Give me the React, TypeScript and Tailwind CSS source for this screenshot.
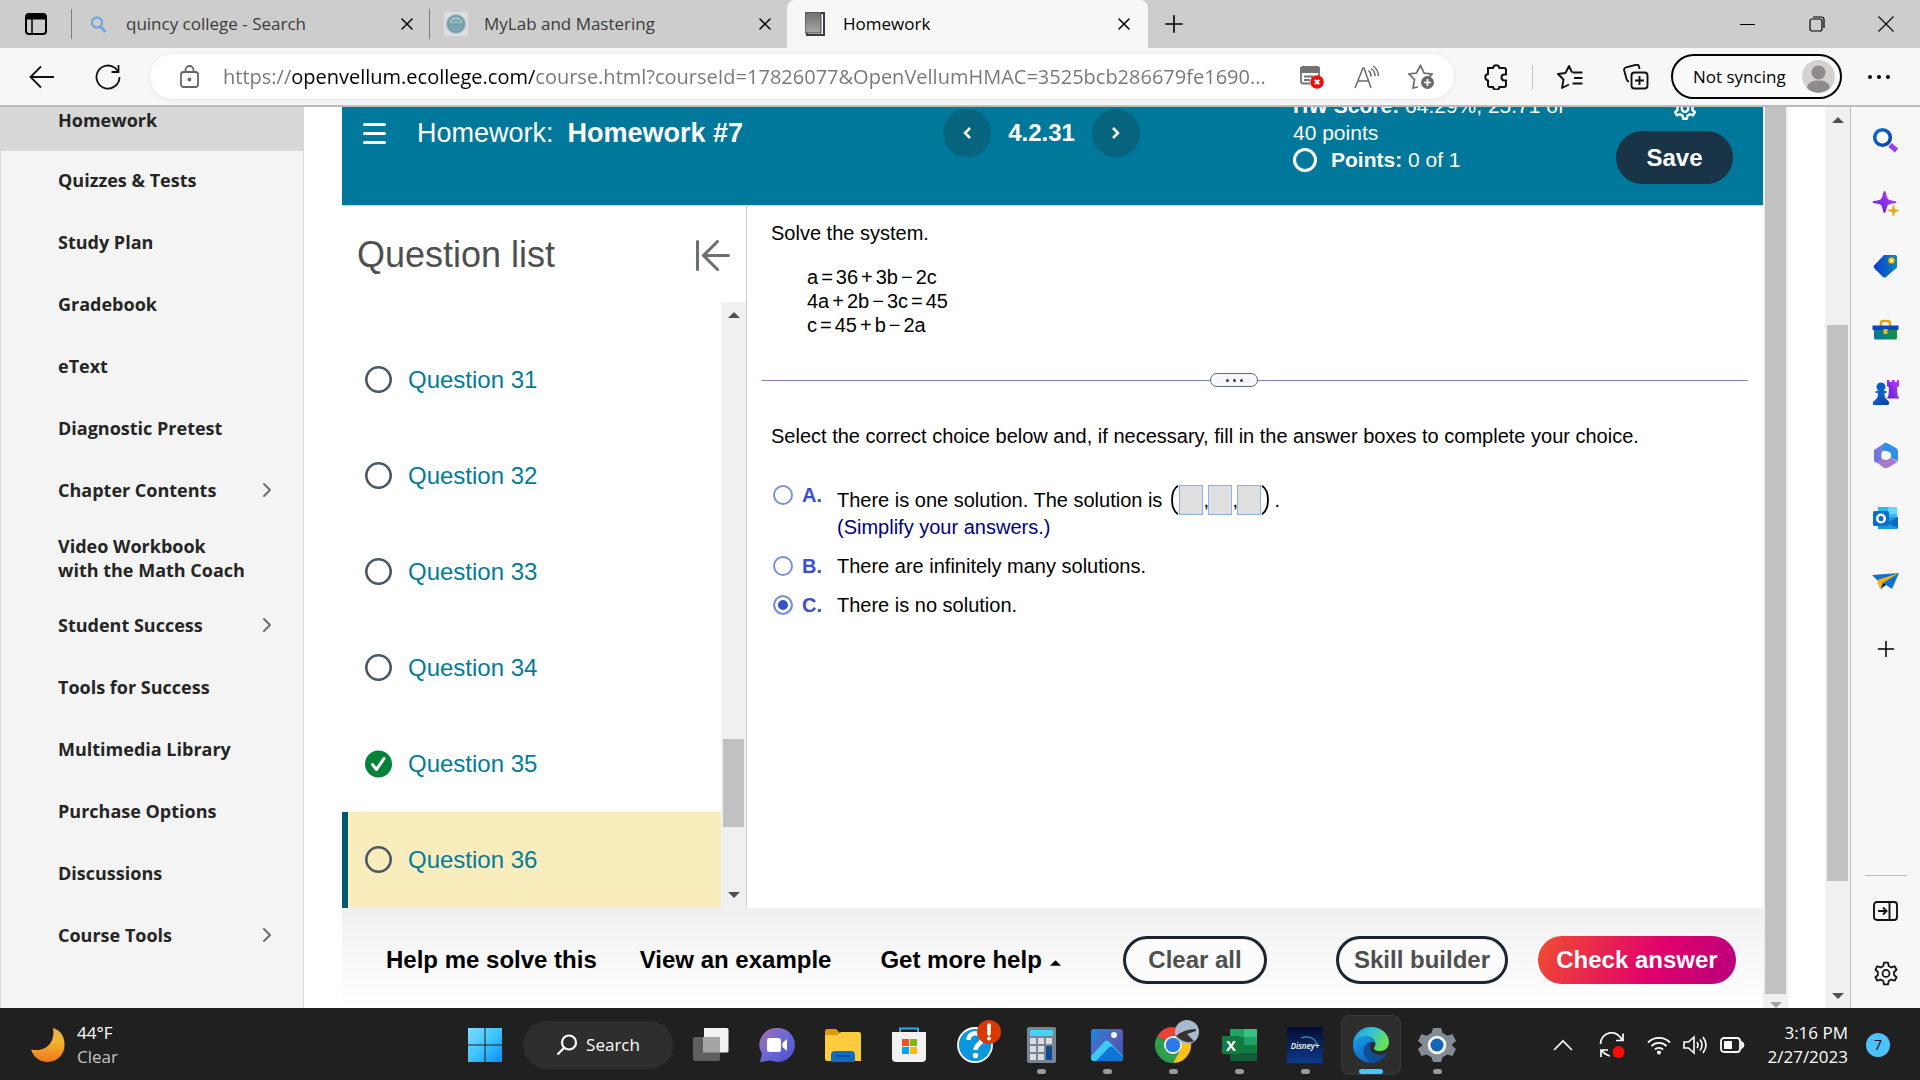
import { useState } from 'react';
import type { ReactNode } from 'react';
import { ChevronRight, Plus, X } from 'lucide-react';

const navItems = [
  { label: 'Quizzes & Tests' },
  { label: 'Study Plan' },
  { label: 'Gradebook' },
  { label: 'eText' },
  { label: 'Diagnostic Pretest' },
  { label: 'Chapter Contents', more: true },
  { label: 'Video Workbook with the Math Coach', tall: true },
  { label: 'Student Success', more: true },
  { label: 'Tools for Success' },
  { label: 'Multimedia Library' },
  { label: 'Purchase Options' },
  { label: 'Discussions' },
  { label: 'Course Tools', more: true },
];

const questions = [
  { id: 31, done: false },
  { id: 32, done: false },
  { id: 33, done: false },
  { id: 34, done: false },
  { id: 35, done: true },
  { id: 36, done: false },
];

const equations = [
  ['a', '=', '36', '+', '3b', '−', '2c'],
  ['4a', '+', '2b', '−', '3c', '=', '45'],
  ['c', '=', '45', '+', 'b', '−', '2a'],
];

export default function App() {
  return (
    <div className="flex h-screen flex-col overflow-hidden bg-white font-['Open_Sans','Noto_Sans',sans-serif] text-black">
      <TabStrip />
      <Toolbar />
      <div className="flex min-h-0 flex-1">
        <CourseNav />
        <main className="flex min-w-0 flex-1 pl-[38px] font-['Liberation_Sans',Arial,sans-serif]">
          <div className="flex min-w-0 flex-1 flex-col">
            <HomeworkHeader />
            <div className="flex min-h-0 flex-1">
              <QuestionList />
              <Question />
            </div>
            <ActionBar />
          </div>
          {/* Scrollbar of the inner frame */}
          <div className="flex w-[25px] flex-col items-center bg-[#f0f0f0]">
            <div className="w-[21px] flex-1 bg-[#c1c1c1]" />
            <div className="flex h-[14px] items-end overflow-hidden">
              <Arrow className="h-[6px] w-[12px] rotate-180 text-[#a3a3a3]" />
            </div>
          </div>
        </main>
        {/* Scrollbar of the page */}
        <div className="ml-[37px] flex w-[26px] flex-col items-center border-r border-[#bcbcbc] bg-[#f0f0f0]">
          <Arrow className="mt-[10px] h-[6px] w-[12px] shrink-0 text-[#505050]" />
          <div className="mt-[202px] w-[21px] flex-1 bg-[#c1c1c1]" />
          <Arrow className="mt-[112px] mb-[9px] h-[6px] w-[12px] shrink-0 rotate-180 text-[#505050]" />
        </div>
        <EdgeSidebar />
      </div>
      <Taskbar />
    </div>
  );
}

function Arrow({ className }: { className: string }) {
  return (
    <svg viewBox="0 0 12 6" className={className}>
      <path d="M0 6 6 0l6 6z" fill="currentColor" />
    </svg>
  );
}

function TabStrip() {
  return (
    <header className="flex h-12 shrink-0 bg-[#cdcdcd] text-[17px]">
      <button aria-label="Tab actions" className="flex w-[71px] items-center justify-center">
        <svg width="22" height="22" viewBox="0 0 22 22" fill="none" stroke="#000" strokeWidth="2">
          <rect x="1" y="1" width="20" height="20" rx="3" />
          <path d="M2 4h18" strokeWidth="5" />
          <path d="M7 6v15" strokeWidth="1.5" />
        </svg>
      </button>
      <Tab title="quincy college - Search">
        <svg width="17" height="17" viewBox="0 0 17 17" fill="none" stroke="#74a9da" strokeWidth="2.4">
          <circle cx="7" cy="6.5" r="5" />
          <path d="m10.500 10.500 5 5.500" strokeWidth="3" />
        </svg>
      </Tab>
      <Tab title="MyLab and Mastering">
        <svg width="24" height="24" viewBox="0 0 24 24">
          <path d="M0 0h24v24H0z" fill="#dedede" />
          <circle cx="12" cy="12" r="10" fill="#9dbcc4" />
          <circle cx="12" cy="12" r="8" fill="none" stroke="#6d9aa6" strokeWidth="1.500" />
          <path d="M5 12h14v2a7 5 0 0 1-14 0z" fill="#7fa6b0" />
          <path d="M5 12h14M8 9h8" stroke="#5d8f9c" strokeWidth="1.200" />
        </svg>
      </Tab>
      <Tab title="Homework" active>
        <svg width="20" height="24" viewBox="0 0 20 24">
          <defs>
            <linearGradient id="book" x1="0" y1="0" x2="0" y2="1">
              <stop offset="0" stopColor="#6e6e6e" />
              <stop offset="1" stopColor="#a8a8a8" />
            </linearGradient>
          </defs>
          <rect x="2" y="1" width="17" height="22" fill="#fff" stroke="#3c3a42" strokeWidth="2" />
          <rect x="0" y="0" width="16" height="21" fill="url(#book)" stroke="#444" strokeWidth="1" />
        </svg>
      </Tab>
      <button aria-label="New tab" className="flex w-[52px] items-center justify-center">
        <Plus size={28} strokeWidth={1.4} />
      </button>
      <div className="ml-auto flex">
        <button aria-label="Minimize" className="flex w-[69px] items-center justify-center">
          <span className="h-px w-[15px] bg-black" />
        </button>
        <button aria-label="Restore" className="flex w-[69px] items-center justify-center">
          <svg width="16" height="16" viewBox="0 0 16 16" fill="none" stroke="#000" strokeWidth="1.2">
            <rect x="1" y="3" width="12" height="12" rx="2" />
            <path d="M4 1h8.500a2.500 2.500 0 0 1 2.500 2.500V12" />
          </svg>
        </button>
        <button aria-label="Close" className="flex w-[69px] items-center justify-center">
          <svg width="16" height="16" viewBox="0 0 16 16" stroke="#000" strokeWidth="1.1">
            <path d="m.5.500 15 15m0-15-15 15" />
          </svg>
        </button>
      </div>
    </header>
  );
}

function Tab({ title, active, children }: { title: string; active?: boolean; children: ReactNode }) {
  return (
    <div
      className={
        active
          ? 'flex w-[361px] items-center rounded-t-lg bg-[#f7f7f7] pl-3 pr-[14px]'
          : 'flex w-[358px] items-center pr-3 text-[#3b3b3b]'
      }
    >
      {!active && <span className="mr-[10px] h-[30px] w-px bg-[#7d7d7d]" />}
      <span className="flex w-8 justify-center">{children}</span>
      <span className="ml-3 flex-1 truncate">{title}</span>
      <button aria-label={'Close ' + title} className="text-black">
        <X size={20} strokeWidth={1.8} />
      </button>
    </div>
  );
}

function Toolbar() {
  return (
    <div className="flex h-[59px] shrink-0 items-center border-b-2 border-[#bcbcbc] bg-[#f7f7f7]">
      <button aria-label="Back" className="ml-[29px]">
        <svg width="26" height="24" viewBox="0 0 26 24" fill="none" stroke="#111" strokeWidth="1.800">
          <path d="M25 12H2M12 1.500 1.500 12 12 22.500" />
        </svg>
      </button>
      <button aria-label="Refresh" className="ml-10">
        <svg width="26" height="26" viewBox="0 0 26 26" fill="none" stroke="#111" strokeWidth="1.800">
          <path d="M24.500 13a11.500 11.500 0 1 1-4.500-9.100l3 3" />
          <path d="M23.500 1v7H16.500" />
        </svg>
      </button>
      <div className="ml-[29px] flex h-[45px] min-w-0 flex-1 items-center rounded-full bg-white pl-[30px] pr-5 shadow-[0_1px_5px_rgba(0,0,0,0.08)]">
        <svg width="19" height="23" viewBox="0 0 19 23" fill="none" stroke="#666" strokeWidth="1.800" className="shrink-0">
          <rect x="1" y="7" width="17" height="15" rx="2.500" />
          <path d="M5.500 7V5a4 4 0 0 1 8 0v2" />
          <circle cx="9.500" cy="14.500" r="1" fill="#666" />
        </svg>
        <input
          aria-label="Address"
          readOnly
          value="https://openvellum.ecollege.com/course.html?courseId=17826077&OpenVellumHMAC=3525bcb286679fe1690..."
          className="ml-6 h-8 min-w-0 flex-1 bg-[linear-gradient(90deg,#767676_69px,#000_69px,#000_312px,#767676_312px)] bg-clip-text text-[20px] text-transparent outline-none"
        />
        <button aria-label="Pop-ups blocked" className="mx-4 shrink-0">
          <svg width="25" height="24" viewBox="0 0 25 24">
            <path d="M1 3.500A2.500 2.500 0 0 1 3.500 1h15A2.500 2.500 0 0 1 21 3.500V8H1z" fill="#737373" />
            <path d="M2 6v10.500A2 2 0 0 0 4 18.500h7M20 6v5M5 11.500h9M5 15h6" fill="none" stroke="#737373" strokeWidth="1.800" />
            <circle cx="18" cy="17" r="6.800" fill="#f20d0d" />
            <path d="m15.800 14.800 4.400 4.400m0-4.400-4.400 4.400" stroke="#fff" strokeWidth="2" />
          </svg>
        </button>
        <button aria-label="Read aloud" className="mx-[14px] shrink-0">
          <svg width="26" height="24" viewBox="0 0 26 24" fill="none" stroke="#6b6b6b" strokeWidth="1.500">
            <path d="m1 23 8-20h1l7 20M4 16h10.500" />
            <path d="M14.500 5.500a6.500 6.500 0 0 1 2.500 6M17 3.500a9 9 0 0 1 4 7.500M19 1a12.500 12.500 0 0 1 5.500 10" />
          </svg>
        </button>
        <button aria-label="Add to favorites" className="ml-[14px] shrink-0">
          <svg width="26" height="26" viewBox="0 0 26 26" fill="none" stroke="#6b6b6b" strokeWidth="1.700">
            <path d="M10 23 5 24l1.500-8.500L1 10l7.500-1L12.500 1.500 16 9l8 1.200-3 3" />
            <circle cx="19.500" cy="18.500" r="6.500" fill="#6b6b6b" stroke="none" />
            <path d="M19.500 15v7M16 18.500h7" stroke="#fff" />
          </svg>
        </button>
      </div>
      <button aria-label="Extensions" className="ml-[30px]">
        <svg width="24" height="26" viewBox="0 0 24 26" fill="none" stroke="#111" strokeWidth="2">
          <path d="M4 4h5a3.300 3.300 0 0 1 6.500 0H20a2 2 0 0 1 2 2v4.500h-1.500a3 3 0 0 0 0 6H22V21a2 2 0 0 1-2 2h-4.500a3.300 3.300 0 0 1-6.500 0H6a2 2 0 0 1-2-2v-4.500a3.300 3.300 0 0 1 0-6.500z" />
        </svg>
      </button>
      <span className="ml-6 h-6 w-px bg-[#c4c4c4]" />
      <button aria-label="Favorites" className="ml-6">
        <svg width="26" height="26" viewBox="0 0 26 26" fill="none" stroke="#111" strokeWidth="1.900">
          <path d="M15 8.500 12 2 8.500 9 1 10l5.500 5.500L5 24l7-3.500M15.500 8.500h10M17 14h8.500M15.500 19.500h10" strokeLinejoin="round" />
        </svg>
      </button>
      <button aria-label="Collections" className="ml-10">
        <svg width="26" height="26" viewBox="0 0 26 26" fill="none" stroke="#111" strokeWidth="1.900">
          <rect x="8.500" y="8.500" width="16" height="16" rx="3" />
          <path d="M16.500 12v9M12 16.500h9M6 17.500c-1.500 0-2-1-2.300-2L1.200 6.500c-.4-1.600.3-2.700 1.800-3.200l10-2.500c1.600-.4 2.600.3 3 1.700l.6 2.500" />
        </svg>
      </button>
      <button className="ml-[22px] flex h-[45px] w-[171px] items-center justify-between rounded-full border-2 border-black bg-[#fafafa] pl-5 pr-[5px] text-[17px]">
        Not syncing
        <svg width="33" height="33" viewBox="0 0 33 33">
          <circle cx="16.500" cy="16.500" r="16.500" fill="#d4d2d0" />
          <circle cx="16.500" cy="12.500" r="7" fill="#8f8b88" />
          <path d="M5 28c1-6 6-7.500 11.500-7.500S27 22 28 28a16.500 16.500 0 0 1-23 0z" fill="#8f8b88" />
        </svg>
      </button>
      <button aria-label="Settings and more" className="mx-[26px] flex gap-[5px] pr-1">
        <span className="size-[4px] rounded-full bg-black" />
        <span className="size-[4px] rounded-full bg-black" />
        <span className="size-[4px] rounded-full bg-black" />
      </button>
    </div>
  );
}

function CourseNav() {
  return (
    <nav className="w-[304px] shrink-0 overflow-hidden border-x border-[#d8d8d8] bg-[#f4f4f4] text-[18px] leading-6 font-bold text-[#252525]">
      <a href="#homework" className="flex h-[44px] items-center bg-[#d8d8d8] pb-[18px] pl-[57px]">
        Homework
      </a>
      {navItems.map((item) => (
        <a
          key={item.label}
          href="#"
          className={
            item.tall
              ? 'flex h-[73px] items-center pb-1 pl-[57px] pr-14'
              : 'flex h-[62px] items-center justify-between pb-1 pl-[57px] pr-[24px]'
          }
        >
          {item.label}
          {item.more && <ChevronRight size={24} strokeWidth={2} className="text-[#6a7070]" />}
        </a>
      ))}
    </nav>
  );
}

function HomeworkHeader() {
  return (
    <div className="flex h-[99px] shrink-0 items-end overflow-hidden border-b border-[#c7d3e6] bg-[#00789b] pl-[21px] pr-[30px] text-white">
      <div className="flex flex-1 items-center pb-12">
        <button aria-label="Menu" className="flex h-12 flex-col justify-center gap-[6px]">
          <span className="h-[3px] w-[23px] rounded bg-white" />
          <span className="h-[3px] w-[23px] rounded bg-white" />
          <span className="h-[3px] w-[23px] rounded bg-white" />
        </button>
        <h1 className="ml-[31px] flex gap-[14px] text-[27px]">
          <span>Homework:</span>
          <b>Homework #7</b>
        </h1>
      </div>
      <div className="flex w-[197px] items-center justify-between pb-12 text-2xl font-bold">
        <button aria-label="Previous question" className="flex size-12 items-center justify-center rounded-full bg-[#06647f]">
          <svg width="8" height="12" viewBox="0 0 8 12" fill="none" stroke="#fff" strokeWidth="2.500">
            <path d="M7 1 2 6l5 5" />
          </svg>
        </button>
        4.2.31
        <button aria-label="Next question" className="flex size-12 items-center justify-center rounded-full bg-[#06647f]">
          <svg width="8" height="12" viewBox="0 0 8 12" fill="none" stroke="#fff" strokeWidth="2.500">
            <path d="m1 1 5 5-5 5" />
          </svg>
        </button>
      </div>
      <div className="ml-[153px] w-[323px] pb-8 text-[21px] leading-[27px]">
        <p className="w-[280px]">
          <b>HW Score:</b> 64.29%, 25.71 of 40 points
        </p>
        <p className="flex items-center">
          <svg width="24" height="24" viewBox="0 0 24 24" className="mr-[14px]">
            <circle cx="12" cy="12" r="10.500" fill="none" stroke="#fff" strokeWidth="3" />
          </svg>
          <span>
            <b>Points:</b> 0 of 1
          </span>
        </p>
      </div>
      <div className="flex flex-col items-center gap-2 pb-[21px]">
        <button aria-label="Settings" className="ml-5">
          <GearIcon className="size-[26px]" width={2.2} />
        </button>
        <button className="h-[53px] w-[117px] rounded-full bg-[#193446] text-2xl font-bold">Save</button>
      </div>
    </div>
  );
}

function GearIcon({ className, width }: { className: string; width: number }) {
  return (
    <svg viewBox="0 0 24 24" fill="none" stroke="currentColor" strokeWidth={width} strokeLinejoin="round" className={className}>
      <path d="M9.700 4.200 10.300 1.300h3.400l.6 2.900 2.200 1.300 2.900-1 1.700 3-2.200 1.900v2.600l2.200 1.900-1.700 3-2.900-1-2.200 1.300-.6 2.900h-3.400l-.6-2.900-2.200-1.300-2.900 1-1.700-3 2.200-1.900V9.400L2.900 7.500l1.700-3 2.900 1z" />
      <circle cx="12" cy="10.700" r="3" />
    </svg>
  );
}

function QuestionList() {
  return (
    <aside className="flex w-[405px] shrink-0 flex-col border-r border-[#c7cfe0]">
      <div className="flex h-24 shrink-0 items-center justify-between pl-[15px] pr-4 pt-[2px]">
        <h2 className="text-4xl text-[#4f4f4f]">Question list</h2>
        <button aria-label="Collapse question list">
          <svg width="34" height="31" viewBox="0 0 34 31" fill="none" stroke="#6a7070" strokeWidth="3" strokeLinecap="round">
            <path d="M1.500 1.500v28M32.500 15.500H8M21.500 1.500 7.500 15.500l14 14" />
          </svg>
        </button>
      </div>
      <div className="flex min-h-0 flex-1">
        <ul className="flex flex-1 flex-col justify-end overflow-hidden">
          {questions.map((q) => (
            <li key={q.id}>
              <a
                href="#"
                className={
                  q.id === 36
                    ? 'flex h-24 items-center border-l-6 border-[#005a70] bg-[#f9ecbd] pl-[17px] text-2xl text-[#047a9c]'
                    : 'flex h-24 items-center border-l-6 border-transparent pl-[17px] text-2xl text-[#047a9c]'
                }
              >
                <svg width="27" height="28" viewBox="0 0 27 28" fill="none" className="mr-4">
                  {q.done ? (
                    <>
                      <circle cx="13.500" cy="14" r="13.500" fill="#038238" />
                      <path d="m7.500 14.500 4 5L19 8.500" stroke="#fff" strokeWidth="3" strokeLinecap="round" strokeLinejoin="round" />
                    </>
                  ) : (
                    <circle cx="13.500" cy="13.500" r="12.200" stroke="#4a5864" strokeWidth="2.600" />
                  )}
                </svg>
                Question {q.id}
              </a>
            </li>
          ))}
        </ul>
        <div className="flex w-[25px] flex-col items-center bg-[#f0f0f0]">
          <Arrow className="mt-[10px] h-[6px] w-[12px] text-[#505050]" />
          <div className="mt-auto h-[88px] w-[21px] bg-[#c1c1c1]" />
          <Arrow className="mt-[65px] mb-[10px] h-[6px] w-[12px] rotate-180 text-[#505050]" />
        </div>
      </div>
    </aside>
  );
}

function Question() {
  const [choice, setChoice] = useState('C');

  return (
    <section className="flex-1 px-[15px] pt-[15px] text-[20px] leading-6">
      <p className="pl-[9px]">Solve the system.</p>
      <div className="mt-5 pl-[45px]">
        {equations.map((parts, i) => (
          <p key={i} className="flex gap-[3px]">
            {parts.map((part, j) => (
              <span key={j}>{part}</span>
            ))}
          </p>
        ))}
      </div>

      <div className="mt-9 flex items-center">
        <span className="h-px flex-1 bg-[#7f88a8]" />
        <button aria-label="Resize panes" className="flex h-[14px] w-12 items-center justify-center gap-[4px] rounded-[7px] border border-[#5b6b7b] bg-[#f5f7f9]">
          <span className="size-[3px] rounded-full bg-[#333f4a]" />
          <span className="size-[3px] rounded-full bg-[#333f4a]" />
          <span className="size-[3px] rounded-full bg-[#333f4a]" />
        </button>
        <span className="h-px grow basis-[42px] bg-[#7f88a8]" />
      </div>

      <p className="mt-[37px] pl-[9px]">
        Select the correct choice below and, if necessary, fill in the answer boxes to complete your choice.
      </p>

      <div className="mt-[37px] flex flex-col gap-[15px] pl-[11px]">
        <div className="flex items-start">
          <Choice letter="A" choice={choice} onPick={setChoice} />
          <div>
            <div className="flex h-[30px] items-center">
              <label htmlFor="choice-A">There is one solution. The solution is</label>
              <Paren className="ml-2" />
              <AnswerBox label="First value" />
              <span className="w-[5px]">,</span>
              <AnswerBox label="Second value" />
              <span className="w-[5px]">,</span>
              <AnswerBox label="Third value" />
              <Paren className="rotate-180" />
              <span className="ml-1">.</span>
            </div>
            <p className="text-[#00007f]">(Simplify your answers.)</p>
          </div>
        </div>
        <div className="flex items-center">
          <Choice letter="B" choice={choice} onPick={setChoice} />
          <label htmlFor="choice-B">There are infinitely many solutions.</label>
        </div>
        <div className="flex items-center">
          <Choice letter="C" choice={choice} onPick={setChoice} />
          <label htmlFor="choice-C">There is no solution.</label>
        </div>
      </div>
    </section>
  );
}

function Choice({ letter, choice, onPick }: { letter: string; choice: string; onPick: (letter: string) => void }) {
  return (
    <div className="flex h-5 w-16 items-center gap-[9px]">
      <input
        type="radio"
        name="choice"
        id={'choice-' + letter}
        checked={choice === letter}
        onChange={() => onPick(letter)}
        className="size-5 shrink-0 appearance-none rounded-full border-2 border-[#7a8fe0] bg-white checked:bg-[#3351c9] checked:shadow-[inset_0_0_0_3px_#fff]"
      />
      <b className="text-[#3b50cc]">{letter}.</b>
    </div>
  );
}

function AnswerBox({ label }: { label: string }) {
  return <input type="text" aria-label={label} className="h-[30px] w-6 border border-[#8fb0ec] bg-[#dfdfdf] outline-none" />;
}

function Paren({ className }: { className: string }) {
  return (
    <svg width="9" height="30" viewBox="0 0 9 30" fill="none" stroke="#000" strokeWidth="1.800" className={className}>
      <path d="M8 .8C0 6 0 24 8 29.200" />
    </svg>
  );
}

function ActionBar() {
  return (
    <div className="flex h-[100px] shrink-0 items-center bg-linear-to-b from-[#f0f0f0] to-white pl-11 pr-[27px] pt-1 text-2xl font-bold">
      <button className="mr-[43px]">Help me solve this</button>
      <button className="mr-[49px]">View an example</button>
      <button className="flex items-center gap-2">
        Get more help
        <Arrow className="mt-[5px] h-[6px] w-[11px]" />
      </button>
      <button className="ml-auto h-12 w-36 rounded-full border-3 border-[#1c2530] bg-[#fcfcfc] text-[#4f4f4f]">Clear all</button>
      <button className="ml-[69px] h-12 w-[172px] rounded-full border-3 border-[#1c2530] bg-[#fcfcfc] text-[#4f4f4f]">Skill builder</button>
      <button className="ml-[30px] h-12 w-[198px] rounded-full bg-[linear-gradient(115deg,#f04e30,#e0006c_60%,#b5007c)] text-white">
        Check answer
      </button>
    </div>
  );
}

function EdgeSidebar() {
  return (
    <aside className="flex w-[69px] shrink-0 flex-col items-center bg-[#f7f7f7] pt-[2px]">
      <svg width="0" height="0" className="absolute">
        <defs>
          <linearGradient id="blue" x1="0" y1="0" x2="1" y2="1">
            <stop offset="0" stopColor="#0f6fd0" />
            <stop offset="1" stopColor="#0a3fae" />
          </linearGradient>
          <linearGradient id="tag" x1="0" y1="0" x2="1" y2="0">
            <stop offset="0" stopColor="#0a3cd0" />
            <stop offset="1" stopColor="#0b84b8" />
          </linearGradient>
          <linearGradient id="purple" x1="0" y1="1" x2="1" y2="0">
            <stop offset="0" stopColor="#5a1fd0" />
            <stop offset="1" stopColor="#c03cff" />
          </linearGradient>
          <linearGradient id="green" x1="0" y1="0" x2="1" y2="0">
            <stop offset="0" stopColor="#0873a8" />
            <stop offset="1" stopColor="#12933f" />
          </linearGradient>
        </defs>
      </svg>
      <SideButton label="Search">
        <circle cx="10.500" cy="10.500" r="7.800" fill="#fff" stroke="url(#blue)" strokeWidth="3.600" />
        <path d="m18 18 6.500 5.500" stroke="#9a3df0" strokeWidth="5" />
      </SideButton>
      <SideButton label="Discover">
        <path d="M12.500 1c1.800 0 1.800 6 3.500 8s8.500 1.500 8.500 3-6.800 1.500-8.500 3-1.700 8-3.500 8-1.700-6.500-3.500-8S.5 13.500.5 12 7 11 9 9s1.700-8 3.500-8z" fill="url(#purple)" />
        <path d="M21.500 15c1 0 1 3.500 1.500 4s4 .5 4 1.500-3.500 1-4 1.500-.5 4-1.500 4-1-3.500-1.500-4-4-.5-4-1.500 3.500-1 4-1.500.5-4 1.500-4z" fill="#eda90c" />
      </SideButton>
      <SideButton label="Shopping">
        <path d="M12 2h11a2 2 0 0 1 2 2v10.500L14 24c-1.500 1-2.500.5-3.500-.5l-8-8c-1-1-1-2.500 0-3.500z" fill="url(#tag)" />
        <circle cx="19.500" cy="7.500" r="2.400" fill="#fff" stroke="#f4b400" strokeWidth="1.800" />
      </SideButton>
      <SideButton label="Tools">
        <path d="M9 10V7a2 2 0 0 1 2-2h5a2 2 0 0 1 2 2v3" fill="none" stroke="#eda50c" strokeWidth="2.600" />
        <path d="M2 13h23v9a1.500 1.500 0 0 1-1.500 1.500h-20A1.500 1.500 0 0 1 2 22z" fill="url(#green)" />
        <path d="M.5 9.500h26v4.500h-26z" fill="#0a47c4" />
        <path d="M11.500 13h4v5h-4z" fill="#f5b80f" />
      </SideButton>
      <SideButton label="Games">
        <path d="M15 1h2.500v2H20V1h2.500v2H25V1h2v6l-2 1.500.5 8 2 3H15l1.500-3 .5-8L15 7z" fill="url(#purple)" />
        <circle cx="9" cy="8" r="4.500" fill="#0d5fc8" />
        <path d="M3.500 12h11v2h-2c0 4 .5 5 4 8 1 2 .5 4-.5 4H1.500c-1-1-1-3 .5-4 3.500-3 4-4 4-8H3.500z" fill="url(#blue)" />
      </SideButton>
      <SideButton label="Microsoft 365">
        <path d="M2 8 12 1.500c1.500-.8 3-.5 3-.5L11 9l-2 2v7L4 21l-2-2z" fill="#7a78dc" />
        <path d="M12 1.500c1-.8 3-.8 4 0l8 4.500c1.500 1 2 2 2 4v9l-7-3v-5L10 8z" fill="#2f8fe6" />
        <path d="M2 18.500 9 17l10-1 6.500 3.500-1 1-8 5c-1.500.8-3.500.8-5 0z" fill="#a77bcc" />
        <path d="M2 8v10.500l3 2 4.500-3v-7z" fill="#6f76dc" />
        <circle cx="14" cy="13.500" r="4.600" fill="#f7f7f7" />
      </SideButton>
      <SideButton label="Outlook">
        <path d="M6 2h19v14H6z" fill="#35b8f1" />
        <path d="M16 2h9v7h-9z" fill="#5fdcff" />
        <path d="M5 12l21 0v11a1 1 0 0 1-1 1H6z" fill="#1a9ae0" />
        <path d="m15 18 11-6v11z" fill="#0f6cbd" />
        <rect x="1" y="6" width="16" height="15" rx="1.500" fill="#0a6fcc" />
        <circle cx="9" cy="13.500" r="3.800" fill="none" stroke="#fff" strokeWidth="2.500" />
      </SideButton>
      <SideButton label="Drop">
        <path d="M0 7 27 5l-7 16-6-4-5 4-2-7z" fill="#0c72cf" />
        <path d="M27 5 5 12l3 9 2-1 1-5z" fill="#f3ae12" />
        <path d="m9 20 2-5 3 2z" fill="#1c1a4a" />
      </SideButton>
      <button aria-label="Customize sidebar" className="mt-1 flex h-[63px] items-center">
        <Plus size={26} strokeWidth={1.400} />
      </button>
      <hr className="mt-auto w-[42px] border-[#bcbcbc]" />
      <button aria-label="Hide sidebar" className="mt-[23px]">
        <svg width="25" height="24" viewBox="0 0 25 24" fill="none" stroke="#111" strokeWidth="1.900">
          <rect x="1" y="3" width="23" height="18" rx="3" />
          <path d="M16.500 3v18M5 12h8M10 8.500l3.500 3.500-3.500 3.500" />
        </svg>
      </button>
      <button aria-label="Sidebar settings" className="mt-[38px] mb-[19px]">
        <GearIcon className="size-7 text-[#111]" width={1.5} />
      </button>
    </aside>
  );
}

function SideButton({ label, children }: { label: string; children: ReactNode }) {
  return (
    <button aria-label={label} className="flex h-[63px] w-full shrink-0 items-center justify-center">
      <svg width="27" height="27" viewBox="0 0 27 27">
        {children}
      </svg>
    </button>
  );
}

function Taskbar() {
  return (
    <footer className="flex h-[72px] shrink-0 items-center bg-[#202020] pt-[2px] pl-[2px] text-[17px] text-white">
      <div className="flex flex-1 items-center">
        <svg width="34" height="34" viewBox="0 0 34 34" className="ml-[29px]">
          <defs>
            <linearGradient id="moon" x1="0" y1="0" x2="0" y2="1">
              <stop offset="0" stopColor="#e8b44a" />
              <stop offset="0.4" stopColor="#f2b52c" />
              <stop offset="1" stopColor="#f0761a" />
            </linearGradient>
          </defs>
          <path d="M22 0c7 2 11.500 8 11.500 16A17 17 0 0 1 17 34C9 34 2.500 29.500 0 21.500c12 3 25-5 22-21.500z" fill="url(#moon)" />
        </svg>
        <p className="ml-3 leading-6">
          44°F
          <span className="block text-[#c4c4c4]">Clear</span>
        </p>
      </div>

      <div className="flex">
        <TaskbarButton label="Start">
          <defs>
            <linearGradient id="win" x1="0" y1="0" x2="1" y2="1">
              <stop offset="0" stopColor="#7fdcff" />
              <stop offset="0.5" stopColor="#3fc4fb" />
              <stop offset="1" stopColor="#0a8cf5" />
            </linearGradient>
          </defs>
          <path d="M1 1h16.500v16.500H1zM18.500 1H35v16.500H18.500zM1 18.500h16.500V35H1zM18.500 18.500H35V35H18.500z" fill="url(#win)" />
        </TaskbarButton>
        <button className="mx-[5px] mt-[6px] flex h-12 w-[150px] items-center justify-center gap-2 rounded-full bg-[#2e2e2e]">
          <svg width="22" height="22" viewBox="0 0 22 22" fill="none" stroke="#fff" strokeWidth="2.200">
            <circle cx="13" cy="8.500" r="7" />
            <path d="m8 14-6.500 6.500" />
          </svg>
          Search
        </button>
        <TaskbarButton label="Task view">
          <path d="M11 1h23a1.500 1.500 0 0 1 1.500 1.500V24A1.500 1.500 0 0 1 34 25.500H11z" fill="#f2f2f2" />
          <path d="M0 12a2 2 0 0 1 2-2h25v22a2 2 0 0 1-2 2H2a2 2 0 0 1-2-2z" fill="#5f5f5f" />
          <path d="M10 10h17v15.500H10z" fill="#a5a5a5" />
        </TaskbarButton>
        <TaskbarButton label="Chat">
          <defs>
            <linearGradient id="chat" x1="0" y1="0" x2="1" y2="1">
              <stop offset="0" stopColor="#a86fb0" />
              <stop offset="0.5" stopColor="#6a68d4" />
              <stop offset="1" stopColor="#4a4fcf" />
            </linearGradient>
          </defs>
          <path d="M18 1a17 17 0 1 1-6 32.500L1 35l2-8A17 17 0 0 1 18 1z" fill="url(#chat)" />
          <rect x="8" y="11" width="14" height="14" rx="2.500" fill="#fff" />
          <path d="m23.500 16 4.500-4v12l-4.500-4z" fill="#fff" />
        </TaskbarButton>
        <TaskbarButton label="File Explorer">
          <path d="M0 4a2 2 0 0 1 2-2h9l4 4v5H0z" fill="#dc9a10" />
          <path d="M0 8h12l4-3h18a2 2 0 0 1 2 2v27H2a2 2 0 0 1-2-2z" fill="#fccb3e" />
          <path d="M6 35v-7a4 4 0 0 1 4-4h16a4 4 0 0 1 4 4v7z" fill="#0f6cc4" />
          <path d="M11 29h14" stroke="#0a478c" strokeWidth="1.500" />
        </TaskbarButton>
        <TaskbarButton label="Microsoft Store">
          <path d="M9 6V1.500h18V6" fill="none" stroke="#2ea9ec" strokeWidth="2" />
          <path d="M1 5h34v26a4 4 0 0 1-4 4H5a4 4 0 0 1-4-4z" fill="#f1f1f1" />
          <path d="M11 12h7v7h-7z" fill="#f25022" />
          <path d="M19 12h7v7h-7z" fill="#7fba00" />
          <path d="M11 20h7v7h-7z" fill="#00a4ef" />
          <path d="M19 20h7v7h-7z" fill="#ffb900" />
        </TaskbarButton>
        <TaskbarButton label="Get Help">
          <circle cx="18" cy="18" r="17" fill="#0a97dc" stroke="#fff" strokeWidth="1.800" />
          <path d="M11.500 13c0-9 14-8.500 13.500-1-.3 5-6.500 5.500-6.500 11" fill="none" stroke="#fff" strokeWidth="4.500" />
          <circle cx="18.500" cy="28.500" r="2.700" fill="#fff" />
          <circle cx="32" cy="5" r="12" fill="#d83b01" />
          <path d="M32-2v9" stroke="#fff" strokeWidth="3.600" strokeLinecap="round" />
          <circle cx="32" cy="11.500" r="1.900" fill="#fff" />
        </TaskbarButton>
        <TaskbarButton label="Calculator" running>
          <rect x="4" y="0" width="29" height="36" rx="2" fill="#7b8590" />
          <path d="M7 3h23v6H7z" fill="#41d6f7" />
          <path d="M7 11h6v6H7zM15 11h6v6h-6zM23 11h6v6h-6zM7 19h6v6H7zM15 19h6v6h-6zM7 27h6v6H7zM15 27h6v6h-6z" fill="#d9dee6" />
          <path d="M23 19h6v14h-6z" fill="#114a94" />
        </TaskbarButton>
        <TaskbarButton label="Photos" running>
          <defs>
            <linearGradient id="photo" x1="0" y1="0" x2="1" y2="1">
              <stop offset="0" stopColor="#1788e0" />
              <stop offset="0.5" stopColor="#5560b8" />
              <stop offset="1" stopColor="#3b4fb0" />
            </linearGradient>
          </defs>
          <rect x="2" y="2" width="32" height="32" rx="3" fill="url(#photo)" />
          <path d="M2 29 15.500 14.500c1.500-1.500 3-1.500 4.500 0L34 29v2a3 3 0 0 1-3 3H5a3 3 0 0 1-3-3z" fill="#3fc8f4" />
          <path d="M7 34 20 20.500c1.500-1.500 3-1.500 4.500 0L34 30v1a3 3 0 0 1-3 3z" fill="#0d74d8" />
          <circle cx="25" cy="8" r="3" fill="#f2f2f2" />
        </TaskbarButton>
        <TaskbarButton label="Google Chrome" running>
          <path d="M18 18 2.400 9A18 18 0 0 1 33.600 9z" fill="#ea4335" />
          <path d="M18 18 2.400 9A18 18 0 0 0 18 36z" fill="#2f9e4c" />
          <path d="M18 36 25 21 18 9h15.600A18 18 0 0 1 18 36z" fill="#fbc116" />
          <path d="m18 36 8-14H12z" fill="#2f9e4c" />
          <circle cx="18" cy="18" r="9" fill="#fff" />
          <circle cx="18" cy="18" r="7.300" fill="#2a7be8" />
          <circle cx="32" cy="5" r="12" fill="#a9b9cf" />
          <path d="M21 9q8-7 20-7v2l-9 3 7 7q-8 4-18-5z" fill="#39332f" />
        </TaskbarButton>
        <TaskbarButton label="Excel" running>
          <path d="M9 2h27v32H9z" fill="#107c41" />
          <path d="M9 2h14v8H9z" fill="#21a366" />
          <path d="M23 2h13v8H23z" fill="#33c481" />
          <path d="M23 10h13v8H23z" fill="#21a366" />
          <path d="M9 26h27v8H9z" fill="#185c37" />
          <rect x="1" y="9" width="18" height="18" rx="1.500" fill="#107c41" />
          <text x="10" y="23.500" textAnchor="middle" fill="#fff" fontSize="15" fontWeight="700">X</text>
        </TaskbarButton>
        <TaskbarButton label="Disney+" running>
          <defs>
            <linearGradient id="disney" x1="0" y1="0" x2="0" y2="1">
              <stop offset="0" stopColor="#040b30" />
              <stop offset="1" stopColor="#0b3a8c" />
            </linearGradient>
          </defs>
          <path d="M0 0h36v36H0z" fill="url(#disney)" />
          <path d="M14 11c7-3 14 0 15.500 6" fill="none" stroke="#1d9cc4" strokeWidth="1.200" />
          <text x="18" y="22" textAnchor="middle" fill="#fff" fontSize="8" fontStyle="italic" fontWeight="600">Disney+</text>
        </TaskbarButton>
        <TaskbarButton label="Microsoft Edge" running active>
          <defs>
            <linearGradient id="edgeTop" x1="0" y1="0" x2="1" y2="0.400">
              <stop offset="0" stopColor="#1b9ce0" />
              <stop offset="0.5" stopColor="#35c1d8" />
              <stop offset="1" stopColor="#66e05a" />
            </linearGradient>
            <linearGradient id="edgeLeft" x1="0" y1="0" x2="0.600" y2="1">
              <stop offset="0" stopColor="#1aa0e8" />
              <stop offset="1" stopColor="#0b5fc0" />
            </linearGradient>
          </defs>
          <path d="M0 17C1 6 9 0 18 0c11 0 18 7.500 18 15 0 6-4.500 9-9 9-4 0-6.500-1.500-6-3 .3-1 1.500-2 1.500-4 0-4-4-7.500-9.500-7.500C7 9.500 1.500 13 0 17z" fill="url(#edgeTop)" />
          <path d="M0 18C1 12 7 9 12.500 9.500c5.500 0 9.500 3.500 10 6.500-3-2.500-8-.5-8.500 5-.5 7 6 13 14 11C22 37 15 36.500 10 34 3 30.500-.3 24 0 18z" fill="url(#edgeLeft)" />
          <path d="M19 14.500c-5 .5-9 5-8.500 10.500.5 5 4.500 9.500 8.500 11 6-.5 11.500-4 14-8.500.5-1-.3-1.500-1-1-7 4-16-.5-15-8 .3-1.500 1-3 2-4z" fill="#0c4f96" />
        </TaskbarButton>
        <TaskbarButton label="Settings" running>
          <path d="M14 1h8l1.500 5 5 2.800L33.500 7l3.500 7-4 3.500v1L37 22l-3.500 7-5-1.500-5 2.800L22 35h-8l-1.500-4.700-5-2.800-5 1.500L-1 22l4-3.500v-1L-1 14l3.500-7 5 1.800 5-2.800z" fill="#838b94" />
          <circle cx="18" cy="18" r="9.300" fill="#f4f4f4" />
          <circle cx="18" cy="18" r="6.500" fill="#1166b8" />
        </TaskbarButton>
      </div>

      <div className="flex flex-1 items-center justify-end">
        <button aria-label="Show hidden icons">
          <svg width="20" height="12" viewBox="0 0 20 12" fill="none" stroke="#fff" strokeWidth="1.600">
            <path d="m1 11 9-9 9 9" />
          </svg>
        </button>
        <button aria-label="Updates available" className="ml-[26px]">
          <svg width="26" height="26" viewBox="0 0 26 26" fill="none" stroke="#fff" strokeWidth="1.700">
            <path d="M1.500 12A11 11 0 0 1 23 8.500M24 1.500v7h-7M2 25v-7h7M2.500 18c2 3 5 5 8.500 6" />
            <circle cx="19.500" cy="20" r="6" fill="#fb0b0b" stroke="none" />
          </svg>
        </button>
        <button aria-label="Network, volume and battery" className="ml-[22px] flex items-center gap-3">
          <svg width="24" height="20" viewBox="0 0 24 20" fill="none" stroke="#fff" strokeWidth="1.800">
            <path d="M1 7.500a15.500 15.500 0 0 1 22 0M4.500 11a10.500 10.500 0 0 1 15 0M8 14.500a5.600 5.600 0 0 1 8 0" />
            <circle cx="12" cy="17.500" r="2" fill="#fff" stroke="none" />
          </svg>
          <svg width="25" height="20" viewBox="0 0 25 20" fill="none" stroke="#fff" strokeWidth="1.600">
            <path d="M1 7h4.500L11 2v16l-5.500-5H1zM14 7q2 3 0 6M17 4.500q4 5.500 0 11M20 2q6 8 0 16" />
          </svg>
          <svg width="25" height="18" viewBox="0 0 25 18" fill="none" stroke="#fff" strokeWidth="1.800">
            <rect x="1" y="2" width="19" height="14" rx="3" />
            <path d="M22 6.500q3 2.500 0 5z" fill="#fff" />
            <rect x="4" y="5" width="8" height="8" fill="#fff" stroke="none" />
          </svg>
        </button>
        <p className="ml-[22px] text-right leading-6">
          3:16 PM
          <br />
          2/27/2023
        </p>
        <span className="ml-[18px] mr-[30px] flex size-6 items-center justify-center rounded-full bg-[#4cc2ff] text-sm text-black">7</span>
      </div>
    </footer>
  );
}

function TaskbarButton({ label, running, active, children }: { label: string; running?: boolean; active?: boolean; children: ReactNode }) {
  return (
    <button
      aria-label={label}
      className={
        active
          ? 'mx-[3px] flex h-[60px] w-[60px] flex-col items-center rounded-lg border border-[#3a3a3a] bg-[#2d2d2d] pt-[11px]'
          : 'flex h-[60px] w-[66px] flex-col items-center pt-3'
      }
    >
      <svg width="36" height="36" viewBox="0 0 36 36" className="shrink-0 overflow-visible">
        {children}
      </svg>
      {running && (
        <span className={active ? 'mt-[6px] h-[5px] w-6 rounded-full bg-[#4cc2ff]' : 'mt-[6px] h-[5px] w-[9px] rounded-full bg-[#9a9a9a]'} />
      )}
    </button>
  );
}
